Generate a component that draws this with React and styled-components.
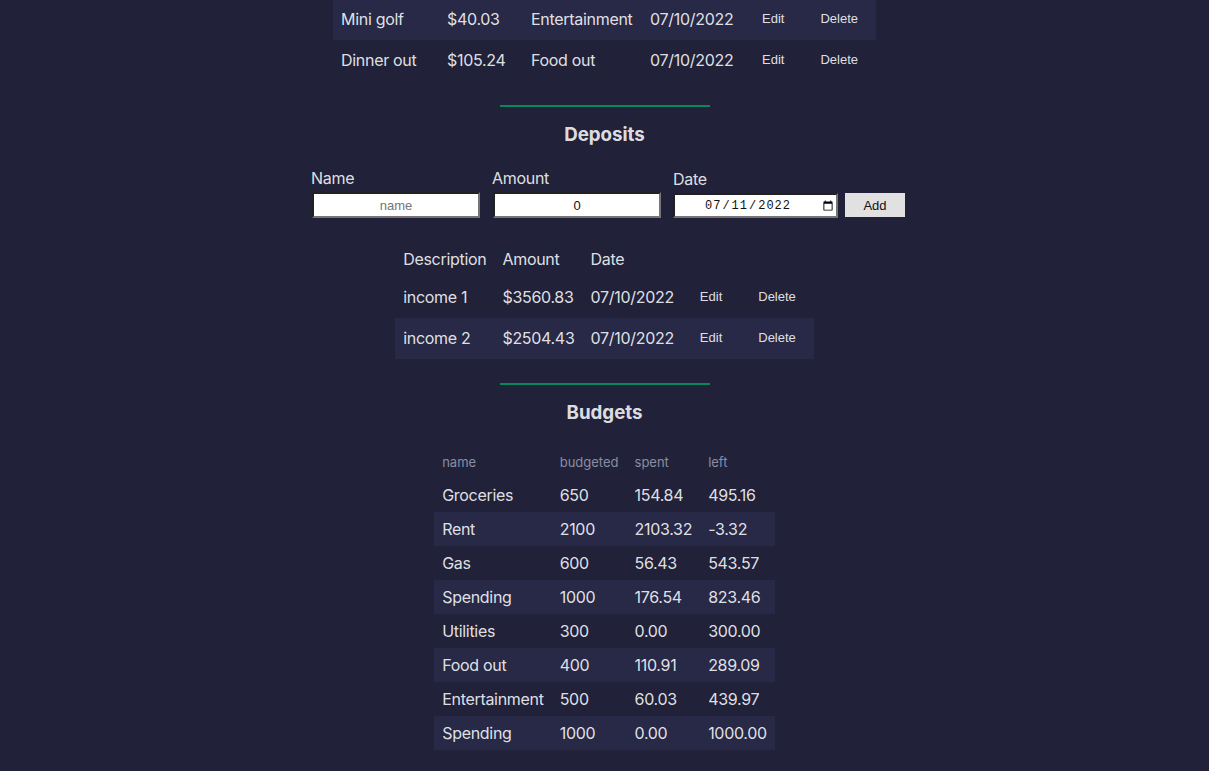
import React from "react";
import styled, { createGlobalStyle } from "styled-components";

const GlobalStyle = createGlobalStyle`
  html, body {
    margin: 0;
    padding: 0;
    background-color: #21223a;
    overflow: hidden;
  }
  body {
    font-family: Inter, "Liberation Sans", Arial, sans-serif;
    font-size: 16px;
    line-height: 24px;
    letter-spacing: -0.3px;
    color: rgba(255, 255, 255, 0.87);
  }
`;

const expenses = [
  { name: "Mini golf", amount: "$40.03", category: "Entertainment", date: "07/10/2022" },
  { name: "Dinner out", amount: "$105.24", category: "Food out", date: "07/10/2022" },
];

const deposits = [
  { name: "income 1", amount: "$3560.83", date: "07/10/2022" },
  { name: "income 2", amount: "$2504.43", date: "07/10/2022" },
];

const budgets = [
  ["Groceries", "650", "154.84", "495.16"],
  ["Rent", "2100", "2103.32", "-3.32"],
  ["Gas", "600", "56.43", "543.57"],
  ["Spending", "1000", "176.54", "823.46"],
  ["Utilities", "300", "0.00", "300.00"],
  ["Food out", "400", "110.91", "289.09"],
  ["Entertainment", "500", "60.03", "439.97"],
  ["Spending", "1000", "0.00", "1000.00"],
];

function App() {
  return (
    <Page>
      <GlobalStyle />
      <ExpenseTable>
        <tbody>
          {expenses.map((e, i) => (
            <Row key={i} $striped={i % 2 === 0}>
              <Cell $w="90px">{e.name}</Cell>
              <Cell $w="68px">{e.amount}</Cell>
              <Cell $w="103px">{e.category}</Cell>
              <Cell $w="86px">{e.date}</Cell>
              <Cell>
                <RowButton>Edit</RowButton>
              </Cell>
              <Cell>
                <RowButton>Delete</RowButton>
              </Cell>
            </Row>
          ))}
        </tbody>
      </ExpenseTable>

      <Divider />
      <Heading>Deposits</Heading>

      <Form>
        <Field>
          <Label>Name</Label>
          <TextInput placeholder="name" />
        </Field>
        <Field>
          <Label>Amount</Label>
          <TextInput defaultValue="0" />
        </Field>
        <Field>
          <Label>Date</Label>
          <DateInput type="date" defaultValue="2022-07-11" />
        </Field>
        <AddButton>Add</AddButton>
      </Form>

      <DepositTable>
        <thead>
          <tr>
            <HeadCell>Description</HeadCell>
            <HeadCell>Amount</HeadCell>
            <HeadCell>Date</HeadCell>
            <HeadCell />
            <HeadCell />
          </tr>
        </thead>
        <tbody>
          {deposits.map((d, i) => (
            <Row key={i} $striped={i % 2 === 1}>
              <Cell>{d.name}</Cell>
              <Cell>{d.amount}</Cell>
              <Cell>{d.date}</Cell>
              <Cell>
                <RowButton>Edit</RowButton>
              </Cell>
              <Cell>
                <RowButton>Delete</RowButton>
              </Cell>
            </Row>
          ))}
        </tbody>
      </DepositTable>

      <Divider />
      <Heading>Budgets</Heading>

      <BudgetTable>
        <thead>
          <tr>
            <SmallHead>name</SmallHead>
            <SmallHead>budgeted</SmallHead>
            <SmallHead>spent</SmallHead>
            <SmallHead>left</SmallHead>
          </tr>
        </thead>
        <tbody>
          {budgets.map((b, i) => (
            <Row key={i} $striped={i % 2 === 1}>
              {b.map((v, j) => (
                <BudgetCell key={j}>{v}</BudgetCell>
              ))}
            </Row>
          ))}
        </tbody>
      </BudgetTable>
    </Page>
  );
}

const Page = styled.div`
  display: flex;
  flex-direction: column;
  align-items: center;
  width: 100vw;
  height: 100vh;
`;

const ExpenseTable = styled.table`
  border-collapse: collapse;
  margin-top: -1px;
`;

const DepositTable = styled.table`
  border-collapse: collapse;
  margin-top: 22px;
`;

const BudgetTable = styled.table`
  border-collapse: collapse;
  margin-top: 21px;
`;

const Row = styled.tr`
  background-color: ${(p) => (p.$striped ? "#272947" : "transparent")};
`;

const Cell = styled.td`
  padding: 8px 8px 9px;
  white-space: nowrap;
  text-align: left;
  width: ${(p) => p.$w || "auto"};
  box-sizing: content-box;
`;

const HeadCell = styled.th`
  padding: 7px 8px 6px;
  font-weight: 400;
  text-align: left;
  white-space: nowrap;
`;

const SmallHead = styled.th`
  padding: 8px 8px;
  font-size: 13px;
  line-height: 16px;
  letter-spacing: 0;
  font-weight: 400;
  text-align: left;
  color: #8a8ca3;
`;

const BudgetCell = styled.td`
  padding: 5px 8px;
  white-space: nowrap;
  text-align: left;
`;

const RowButton = styled.button`
  background: none;
  border: none;
  padding: 0 10px;
  vertical-align: top;
  line-height: 23px;
  font-family: "Liberation Sans", Arial, sans-serif;
  font-size: 13px;
  letter-spacing: 0;
  color: rgba(255, 255, 255, 0.87);
  cursor: pointer;
`;

const Divider = styled.div`
  width: 210px;
  height: 2px;
  background-color: #07875c;
  margin-top: 24px;
`;

const Heading = styled.h3`
  margin: 16px 0 0;
  font-size: 18.72px;
  line-height: 24px;
  letter-spacing: 0;
  font-weight: 700;
`;

const Form = styled.div`
  display: flex;
  align-items: flex-end;
  gap: 12px;
  margin-top: 19px;
  margin-left: 7px;
`;

const Field = styled.label`
  display: flex;
  flex-direction: column;
  align-items: flex-start;
  gap: 2px;
`;

const Label = styled.span`
  font-size: 16px;
  line-height: 24px;
  color: rgba(255, 255, 255, 0.87);
`;

const TextInput = styled.input`
  box-sizing: border-box;
  width: 168px;
  height: 26px;
  margin-left: 1px;
  text-align: center;
  font-family: "Liberation Sans", Arial, sans-serif;
  font-size: 13px;
  letter-spacing: 0;
  color: #111;
  background: #fff;
  border: 2px inset #767676;
  &::placeholder {
    color: #757575;
  }
`;

const DateInput = styled.input`
  box-sizing: border-box;
  width: 165px;
  height: 25px;
  text-align: center;
  font-family: "Liberation Mono", monospace;
  font-size: 12px;
  letter-spacing: 1px;
  color: #111;
  background: #fff;
  border: 2px inset #767676;
`;

const AddButton = styled.button`
  width: 60px;
  height: 24px;
  margin-left: -5px;
  margin-bottom: 1px;
  font-family: "Liberation Sans", Arial, sans-serif;
  font-size: 13px;
  letter-spacing: 0;
  color: #111;
  background: #e1e1e1;
  border: none;
  cursor: pointer;
`;

export default App;
